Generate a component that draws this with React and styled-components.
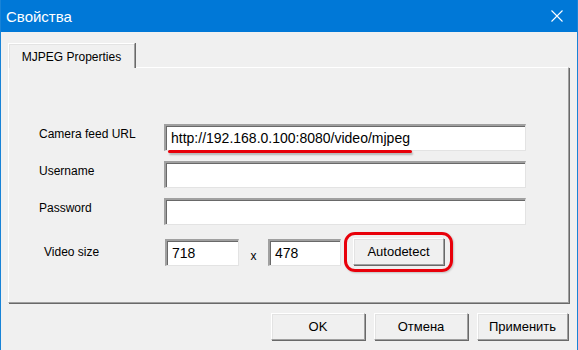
import React from 'react';
import styled, { createGlobalStyle } from 'styled-components';

const GlobalStyle = createGlobalStyle`
  html, body {
    margin: 0;
    padding: 0;
    background: #f0f0f0;
  }
  body {
    font-family: "Liberation Sans", Arial, sans-serif;
  }
`;

// Window frame
const Window = styled.div`
  width: 578px;
  height: 350px;
  box-sizing: border-box;
  border-left: 1px solid #1883d7;
  border-right: 1px solid #1883d7;
  background: #f0f0f0;
  display: flex;
  flex-direction: column;
  overflow: hidden;
`;

const TitleBar = styled.div`
  height: 32px;
  margin: 0 -1px;
  background: #0078d7;
  color: #fff;
  display: flex;
  align-items: center;
  justify-content: space-between;
  padding: 0 15px 0 6px;
  font-size: 15px;
`;

const CloseIcon = () => (
  <svg width="12" height="12" viewBox="0 0 12 12">
    <path d="M0.5 0.5 L11.5 11.5 M11.5 0.5 L0.5 11.5" stroke="#fff" strokeWidth="1.1" />
  </svg>
);

const Body = styled.div`
  flex: 1;
  display: flex;
  flex-direction: column;
  padding: 11px 8px 0 7px;
`;

// Tabs
const TabStrip = styled.div`
  display: flex;
  position: relative;
  z-index: 1;
  margin-bottom: -1px;
`;

const Tab = styled.div`
  width: 127px;
  height: 25px;
  box-sizing: border-box;
  background: #f0f0f0;
  border-top: 1px solid #fff;
  border-left: 1px solid #fff;
  border-right: 1px solid #a0a0a0;
  box-shadow: 1px 0 0 #696969, inset 1px 1px 0 #e3e3e3;
  display: flex;
  align-items: center;
  justify-content: center;
  font-size: 12px;
  color: #000;
  padding-top: 2px;
`;

const Panel = styled.div`
  height: 236px;
  box-sizing: border-box;
  border-top: 1px solid #fff;
  border-left: 1px solid #fff;
  border-right: 1px solid #a0a0a0;
  border-bottom: 1px solid #a0a0a0;
  box-shadow: 1px 1px 0 #696969;
  padding: 56px 0 0 30px;
`;

const Form = styled.div`
  display: flex;
  flex-direction: column;
  gap: 10px;
`;

const Row = styled.div`
  display: flex;
  align-items: flex-start;
  margin-top: ${(p) => p.$gapTop || 0}px;
`;

const Label = styled.div`
  width: ${(p) => 125 - (p.$indent || 0)}px;
  padding-left: ${(p) => p.$indent || 0}px;
  padding-top: ${(p) => p.$top || 2}px;
  font-size: 12px;
  line-height: 16px;
  color: #000;
`;

const TextBox = styled.div`
  position: relative;
  width: ${(p) => p.$w}px;
  height: 27px;
  box-sizing: border-box;
  margin-left: ${(p) => p.$ml || 0}px;
  background: #fff;
  border-top: 2px solid #a0a0a0;
  border-left: 2px solid #a0a0a0;
  border-right: 1px solid #e3e3e3;
  border-bottom: 1px solid #e3e3e3;
  box-shadow: inset 1px 1px 0 #696969;
  font-size: 14px;
  color: #000;
  padding: 4px 0 0 ${(p) => p.$pl || 5}px;
  white-space: nowrap;
`;

const Underline = styled.div`
  position: absolute;
  left: 2px;
  bottom: -3px;
  width: 244px;
  height: 3px;
  border-radius: 2px;
  background: #e8000a;
  box-shadow: 1px 2px 2px rgba(0, 0, 0, 0.25);
`;

const Times = styled.div`
  width: 29px;
  text-align: center;
  font-size: 12px;
  padding-top: 10px;
  color: #000;
`;

const Button = styled.div`
  width: ${(p) => p.$w || 93}px;
  height: ${(p) => p.$h || 27}px;
  box-sizing: border-box;
  background: #f0f0f0;
  border-top: 1px solid #fff;
  border-left: 1px solid #fff;
  border-right: 1px solid #a0a0a0;
  border-bottom: 1px solid #a0a0a0;
  box-shadow: 1px 1px 0 #696969, inset 1px 1px 0 #e3e3e3;
  display: flex;
  align-items: center;
  justify-content: center;
  font-size: ${(p) => p.$fs || 13}px;
  color: #000;
`;

const Highlight = styled.div`
  position: relative;
  margin-left: 12px;
  margin-top: -1px;

  &::after {
    content: '';
    position: absolute;
    left: -9px;
    right: -9px;
    top: -6px;
    bottom: -7px;
    border: 3px solid #e8000a;
    border-radius: 11px;
    box-shadow: 1px 1px 2px rgba(0, 0, 0, 0.2);
  }
`;

const ButtonRow = styled.div`
  display: flex;
  justify-content: flex-end;
  gap: 9px;
  padding-top: 10px;
  padding-right: 1px;
`;

export default function App() {
  return (
    <>
      <GlobalStyle />
      <Window>
        <TitleBar>
          <span>Свойства</span>
          <CloseIcon />
        </TitleBar>
        <Body>
          <TabStrip>
            <Tab>MJPEG Properties</Tab>
          </TabStrip>
          <Panel>
            <Form>
              <Row>
                <Label>Camera feed URL</Label>
                <TextBox $w={362}>
                  http://192.168.0.100:8080/video/mjpeg
                  <Underline />
                </TextBox>
              </Row>
              <Row>
                <Label>Username</Label>
                <TextBox $w={362} />
              </Row>
              <Row>
                <Label>Password</Label>
                <TextBox $w={362} />
              </Row>
              <Row $gapTop={4}>
                <Label $indent={5} $top={5}>Video size</Label>
                <TextBox $w={74} $ml={1}>718</TextBox>
                <Times>x</Times>
                <TextBox $w={73}>478</TextBox>
                <Highlight>
                  <Button $w={91} $h={27}>Autodetect</Button>
                </Highlight>
              </Row>
            </Form>
          </Panel>
          <ButtonRow>
            <Button $w={94}>OK</Button>
            <Button $w={94}>Отмена</Button>
            <Button $w={91}>Применить</Button>
          </ButtonRow>
        </Body>
      </Window>
    </>
  );
}
